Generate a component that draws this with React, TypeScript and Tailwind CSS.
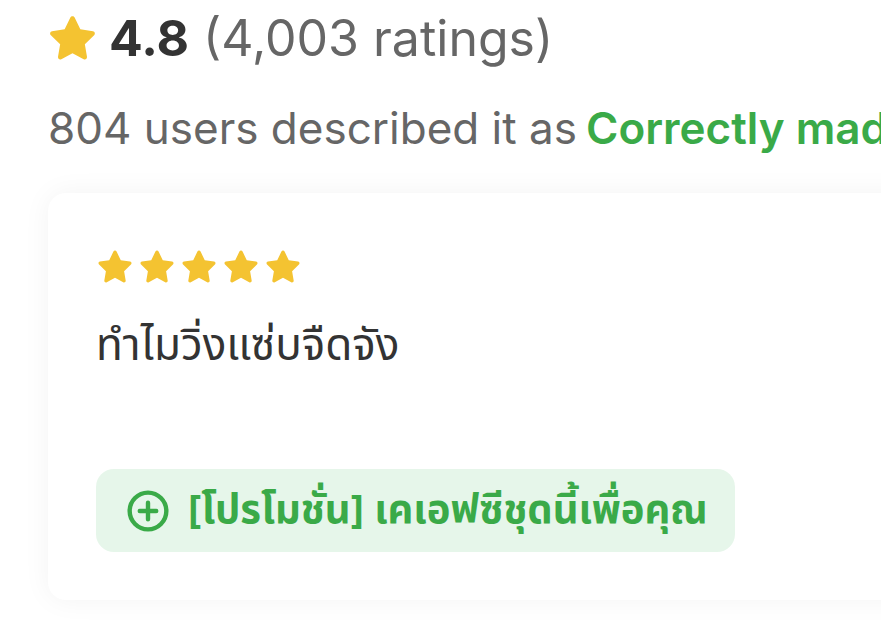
const thai = "font-['Noto_Sans_Thai','Noto_Sans','Liberation_Sans',sans-serif]";

function Star({ className }: { className: string }) {
  return (
    <svg viewBox="0 0 24 24" className={className} fill="#f4c331">
      <path
        d="M12 2.6c.4 0 .7.2.9.6l2.4 4.9 5.3.8c.8.1 1.1 1.1.5 1.7l-3.9 3.8.9 5.3c.1.8-.7 1.4-1.4 1l-4.7-2.5-4.7 2.5c-.7.4-1.5-.2-1.4-1l.9-5.3L2.9 10.6c-.6-.6-.3-1.6.5-1.7l5.3-.8 2.4-4.9c.2-.4.5-.6.9-.6z"
        strokeLinejoin="round"
      />
    </svg>
  );
}

export default function App() {
  return (
    <div className="h-[632px] w-[881px] overflow-hidden bg-white font-['Inter','Liberation_Sans',sans-serif]">
      <div className="flex items-center pl-[48px] pt-[6px]">
        <Star className="-ml-[4px] h-[57px] w-[57px]" />
        <span className="ml-[8px] whitespace-nowrap text-[50px] leading-[64px] text-[#666]">
          <b className="font-bold text-[#333]">4.8</b> (4,003 ratings)
        </span>
      </div>
      <div className="mt-[29px] whitespace-nowrap pl-[48px] text-[44px] leading-[58px] text-[#666]">
        804 users described it as
        <span className="ml-[9px] font-semibold text-[#3aaa48]">Correctly made</span>
      </div>
      <div className="ml-[48px] mt-[36px] h-[407px] w-[900px] rounded-[18px] bg-white px-[48px] pt-[53px] shadow-[0_0_28px_rgba(0,0,0,0.05)]">
        <div className="flex gap-[2px]">
          {[0, 1, 2, 3, 4].map((i) => (
            <Star key={i} className="-ml-[2px] h-[42px] w-[42px]" />
          ))}
        </div>
        <p className={`mt-[29px] whitespace-nowrap text-[44px] leading-[60px] text-[#333] ${thai}`}>
          ทำไมวิ่งแซ่บจืดจัง
        </p>
        <div className="mt-[92px] flex h-[83px] w-[639px] items-center gap-[18px] rounded-[18px] bg-[#e6f6ea] pl-[30px]">
          <svg viewBox="0 0 24 24" className="h-[44px] w-[44px]" fill="none" stroke="#3aaa48" strokeWidth="2.4" strokeLinecap="round">
            <circle cx="12" cy="12" r="10" />
            <path d="M12 7.5v9M7.5 12h9" />
          </svg>
          <span className={`whitespace-nowrap text-[40px] font-bold text-[#3aaa48] ${thai}`}>
            [โปรโมชั่น] เคเอฟซีชุดนี้เพื่อคุณ
          </span>
        </div>
      </div>
    </div>
  );
}
